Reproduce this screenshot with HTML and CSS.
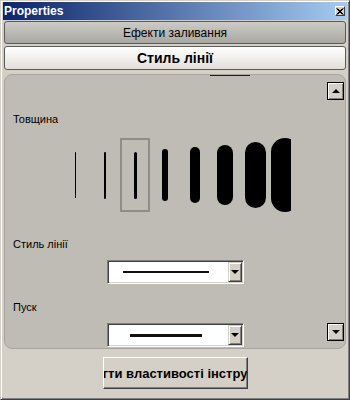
FILE: index.html
```html
<!DOCTYPE html>
<html lang="uk">
<head>
    <meta charset="UTF-8">
    <meta name="viewport" content="width=device-width, initial-scale=1.0">
    <title>Properties</title>
    <link rel="stylesheet" href="styles.css">
</head>
<body>
    <div class="window">
        <!-- Title bar -->
        <div class="titlebar">
            <span class="title">Properties</span>
            <div class="close">
                <svg width="8" height="7" viewBox="0 0 8 7">
                    <path d="M0.5 0.5 L6.5 6.5 M1.5 0.5 L7.5 6.5 M6.5 0.5 L0.5 6.5 M7.5 0.5 L1.5 6.5" stroke="#000" stroke-width="1" fill="none"/>
                </svg>
            </div>
        </div>

        <!-- Section tabs -->
        <div class="tab tab-fill">Ефекти заливання</div>
        <div class="tab tab-line">Стиль лінії</div>

        <div class="panel">
            <div class="marker"></div>
            <div class="scroll scroll-up"><span class="arrow-up"></span></div>
            <div class="scroll scroll-down"><span class="arrow-down"></span></div>

            <div class="label">Товщина</div>
            <div class="widths">
                <div class="cell"><div class="pill w1"></div></div>
                <div class="cell"><div class="pill w2"></div></div>
                <div class="cell selected"><div class="pill w3"></div></div>
                <div class="cell"><div class="pill w4"></div></div>
                <div class="cell"><div class="pill w5"></div></div>
                <div class="cell"><div class="pill w6"></div></div>
                <div class="cell"><div class="pill w7"></div></div>
                <div class="cell"><div class="pill w8"></div></div>
            </div>

            <div class="label label-gap">Стиль лінії</div>
            <div class="combo">
                <div class="combo-field"><div class="sample sample-thin"></div></div>
                <div class="combo-button"><span class="arrow-down"></span></div>
            </div>

            <div class="label label-gap-small">Пуск</div>
            <div class="combo">
                <div class="combo-field"><div class="sample sample-thick"></div></div>
                <div class="combo-button"><span class="arrow-down"></span></div>
            </div>
        </div>

        <div class="actions">
            <button class="save"><span>Зберегти властивості інструменту</span></button>
        </div>
    </div>
</body>
</html>
```

FILE: styles.css
```css
body {
    margin: 0;
    font-family: 'Liberation Sans', Arial, sans-serif;
    color: #000;
}

.window {
    width: 350px;
    height: 400px;
    box-sizing: border-box;
    background: #d4d0c8;
    border: 1px solid;
    border-color: #d4d0c8 #404040 #404040 #d4d0c8;
    box-shadow: inset 1px 1px #fff, inset -1px -1px #808080;
    padding: 1px 2px 2px 2px;
    display: flex;
    flex-direction: column;
}

/* title bar */
.titlebar {
    height: 18px;
    flex: 0 0 18px;
    background: linear-gradient(to right, #0a246a, #a6caf0);
    display: flex;
    align-items: center;
    justify-content: space-between;
    padding: 0 2px 0 1px;
}

.title {
    color: #fff;
    font-weight: bold;
    font-size: 12px;
}

.close {
    width: 10px;
    height: 10px;
    box-sizing: border-box;
    background: #d4d0c8;
    border: 1px solid;
    border-color: #fff #404040 #404040 #fff;
    display: flex;
    align-items: center;
    justify-content: center;
}

/* tabs */
.tab {
    margin: 1px 1px 0;
    height: 23px;
    flex: 0 0 23px;
    box-sizing: border-box;
    border: 1px solid #5a5a58;
    border-radius: 3px;
    display: flex;
    align-items: center;
    justify-content: center;
    font-size: 12px;
    background: linear-gradient(to bottom, #cdcbc6, #a9a7a2);
}

.tab-line {
    margin-top: 2px;
    height: 24px;
    flex-basis: 24px;
    font-size: 14px;
    font-weight: bold;
    background: linear-gradient(to bottom, #ffffff, #e2dfd9);
}

/* main panel */
.panel {
    position: relative;
    margin: 4px 1px 0;
    height: 275px;
    flex: 0 0 275px;
    box-sizing: border-box;
    background: #bfbcb5;
    border: 1px solid #a9a6a0;
    border-radius: 8px;
    padding: 38px 8px 0;
    overflow: hidden;
}

.marker {
    position: absolute;
    top: 0;
    left: 205px;
    width: 40px;
    height: 1px;
    background: #0000ff;
}

.scroll {
    position: absolute;
    right: 1px;
    width: 17px;
    height: 18px;
    box-sizing: border-box;
    border: 1px solid #000;
    background: #d4d0c8;
    box-shadow: inset 1px 1px #fff, inset -1px -1px #808080;
    display: flex;
    align-items: center;
    justify-content: center;
}

.scroll-up {
    top: 7px;
}

.scroll-down {
    top: 248px;
}

.arrow-up {
    width: 0;
    height: 0;
    border-left: 4px solid transparent;
    border-right: 4px solid transparent;
    border-bottom: 4px solid #000;
}

.arrow-down {
    width: 0;
    height: 0;
    border-left: 4px solid transparent;
    border-right: 4px solid transparent;
    border-top: 4px solid #000;
}

.label {
    font-size: 11px;
    line-height: 13px;
    height: 13px;
}

.label-gap {
    margin-top: 26px;
}

.label-gap-small {
    margin-top: 17px;
}

/* line thickness picker */
.widths {
    margin: 12px 0 0 47px;
    width: 231px;
    height: 74px;
    display: flex;
    overflow: hidden;
}

.cell {
    flex: 0 0 30px;
    height: 74px;
    box-sizing: border-box;
    display: flex;
    align-items: center;
    justify-content: center;
}

.cell.selected {
    border: 2px solid #8f8d89;
    flex-basis: 30px;
}

.pill {
    background: #000;
    border-radius: 999px;
    flex-shrink: 0;
}

.w1 { width: 1px; height: 46px; }
.w2 { width: 2px; height: 47px; }
.w3 { width: 3px; height: 47px; }
.w4 { width: 6px; height: 52px; }
.w5 { width: 10px; height: 56px; }
.w6 { width: 16px; height: 60px; }
.w7 { width: 21px; height: 66px; }
.w8 { width: 28px; height: 74px; }

/* combo boxes */
.combo {
    margin: 9px auto 0;
    width: 137px;
    height: 24px;
    box-sizing: border-box;
    border: 1px solid;
    border-color: #808080 #fff #fff #808080;
    box-shadow: inset 1px 1px #404040, inset -1px -1px #d4d0c8;
    padding: 1px;
    background: #fff;
    display: flex;
}

.combo-field {
    flex: 1;
    display: flex;
    align-items: center;
}

.sample {
    background: #111;
}

.sample-thin {
    margin-left: 14px;
    width: 86px;
    height: 2px;
}

.sample-thick {
    margin-left: 21px;
    width: 72px;
    height: 3px;
}

.combo-button {
    width: 14px;
    box-sizing: border-box;
    background: #d4d0c8;
    border: 1px solid;
    border-color: #d4d0c8 #404040 #404040 #d4d0c8;
    box-shadow: inset 1px 1px #fff, inset -1px -1px #808080;
    display: flex;
    align-items: center;
    justify-content: center;
}

/* bottom action */
.actions {
    display: flex;
    justify-content: center;
    margin-top: 8px;
}

.save {
    width: 145px;
    height: 32px;
    box-sizing: border-box;
    padding: 0;
    background: #d4d0c8;
    border: 1px solid;
    border-color: #fff #404040 #404040 #fff;
    box-shadow: inset -1px -1px #808080;
    display: flex;
    align-items: center;
    justify-content: center;
    overflow: hidden;
    font-family: 'Liberation Sans', Arial, sans-serif;
    font-size: 13px;
    font-weight: bold;
    color: #000;
}

.save span {
    white-space: nowrap;
    flex-shrink: 0;
}
```
